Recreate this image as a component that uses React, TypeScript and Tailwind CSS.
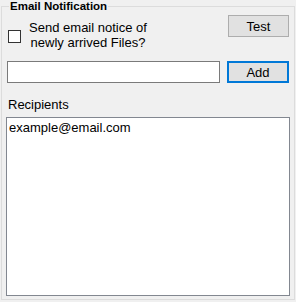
export default function App() {
  return (
    <div className="w-[296px] h-[302px] bg-[#f0f0f0] pt-[6px] pl-[1px] text-[13px] leading-[15px] text-black font-['Liberation_Sans',Arial,sans-serif]">
      <div className="relative w-[294px] h-[294px] border border-[#dcdcdc] pl-[5px] pr-[5px]">
        <span className="absolute top-[-7px] left-[7px] px-[1px] bg-[#f0f0f0] text-[11.5px] leading-[13px] font-bold">
          Email Notification
        </span>

        <div className="flex items-start pt-[8px]">
          <div className="ml-[1px] mt-[15px] w-[13px] h-[13px] border border-[#333333] bg-white" />
          <div className="ml-[5px] mt-[5px] w-[124px] text-center">
            Send email notice of newly arrived Files?
          </div>
          <button className="ml-auto w-[61px] h-[22px] bg-[#e1e1e1] border border-[#adadad] text-center">
            Test
          </button>
        </div>

        <div className="flex mt-[11px]">
          <div className="w-[213px] h-[22px] border border-[#7a7a7a] bg-white" />
          <button className="ml-auto w-[62px] h-[22px] bg-[#e1e1e1] border-2 border-[#0078d7] text-center">
            Add
          </button>
        </div>

        <div className="mt-[14px] ml-[1px]">Recipients</div>

        <div className="mt-[5px] ml-[-1px] w-[284px] h-[179px] border border-[#828790] bg-white pl-[2px] pt-[2px]">
          example@email.com
        </div>
      </div>
    </div>
  );
}
